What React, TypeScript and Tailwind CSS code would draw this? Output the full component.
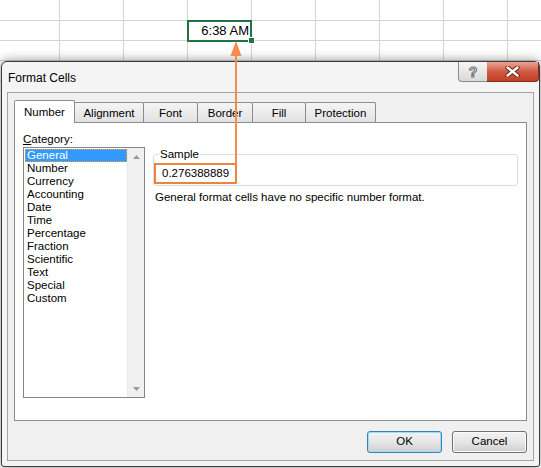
import React from "react";

/* ============================================
   Sheet behind the dialog
============================================ */

function SheetGrid() {
  const rows = [21, 20, 20, 20];
  const cols = [60, 64, 64, 64, 64, 64, 64, 64, 64];

  return (
    <div className="flex flex-col">
      {rows.map((h, r) => (
        <div key={r} className="flex" style={{ height: h }}>
          {cols.map((w, c) => (
            <div
              key={c}
              className="shrink-0 border-r border-b border-[#d4d4d4] flex items-center justify-end pr-[2px] text-[13px] leading-[19px] text-black"
              style={{ width: w }}
            >
              {r === 1 && c === 3 ? "6:38 AM" : null}
            </div>
          ))}
        </div>
      ))}
    </div>
  );
}

/* ============================================
   Dialog bits
============================================ */

const tabs = [
  { label: "Number", w: "w-[61px]" },
  { label: "Alignment", w: "w-[70px]" },
  { label: "Font", w: "w-[55px]" },
  { label: "Border", w: "w-[56px]" },
  { label: "Fill", w: "w-[54px]" },
  { label: "Protection", w: "w-[71px]" },
];

const categories = [
  "General",
  "Number",
  "Currency",
  "Accounting",
  "Date",
  "Time",
  "Percentage",
  "Fraction",
  "Scientific",
  "Text",
  "Special",
  "Custom",
];

function TabRow() {
  return (
    <div className="flex items-end h-[22px]">
      {tabs.map((t, i) =>
        i === 0 ? (
          <div
            key={t.label}
            className={`${t.w} h-[23px] -mb-px relative z-10 bg-white border-t border-l border-r border-[#898c95] rounded-t-[2px] flex items-center justify-center pt-[1px]`}
          >
            {t.label}
          </div>
        ) : (
          <div
            key={t.label}
            className={`${t.w} h-[20px] -ml-px border-t border-l border-r border-[#898c95] rounded-t-[2px] bg-linear-to-b from-[#f5f5f5] to-[#e2e2e2] flex items-center justify-center pt-[2px]`}
          >
            {t.label}
          </div>
        )
      )}
    </div>
  );
}

function CategoryList() {
  return (
    <div className="w-[122px] h-[251px] border border-[#828790] bg-white flex">
      <div className="w-[103px] pl-[1px] pt-[1px] flex flex-col">
        {categories.map((c, i) => (
          <div
            key={c}
            className={`h-[13px] leading-[13px] pl-[2px] ${
              i === 0
                ? "bg-[#3399ff] text-white outline-1 outline-dotted outline-[#e9a544] -outline-offset-1"
                : "text-black"
            }`}
          >
            {c}
          </div>
        ))}
      </div>
      <div className="w-[17px] bg-[#f0f0f0] border-l border-[#e8e8e8] flex flex-col justify-between">
        <div className="h-[17px] flex items-center justify-center">
          <svg width="7" height="4" viewBox="0 0 7 4">
            <polygon points="3.5,0 7,4 0,4" fill="#9a9a9a" />
          </svg>
        </div>
        <div className="h-[17px] flex items-center justify-center">
          <svg width="7" height="4" viewBox="0 0 7 4">
            <polygon points="0,0 7,0 3.5,4" fill="#9a9a9a" />
          </svg>
        </div>
      </div>
    </div>
  );
}

function NumberPanel() {
  return (
    <div className="w-[513px] h-[299px] border border-[#898c95] bg-white flex">
      <div className="pl-[8px] pt-[8px] flex flex-col">
        <div className="h-[16px] leading-[16px]">
          <span className="underline underline-offset-1">C</span>ategory:
        </div>
        <CategoryList />
      </div>
      <div className="ml-[8px] pt-[24px] flex flex-col">
        <fieldset className="w-[365px] border border-[#d5dfe5] rounded-[3px]">
          <legend className="ml-[5px] px-[1px] leading-[15px]">Sample</legend>
          <div className="h-[23px] leading-[22px] pl-[8px]">0.276388889</div>
        </fieldset>
        <div className="mt-[4px] ml-[2px] leading-[15px]">
          General format cells have no specific number format.
        </div>
      </div>
    </div>
  );
}

function DialogButton({ label, primary }: { label: string; primary?: boolean }) {
  return (
    <button
      className={`w-[75px] h-[22px] rounded-[3px] border text-black flex items-center justify-center bg-linear-to-b from-[#f2f2f2] via-[#e6e6e6] to-[#cfcfcf] ${
        primary
          ? "border-[#3c7fb1] shadow-[inset_0_0_0_1px_#9fdcf8]"
          : "border-[#707070] shadow-[inset_0_0_0_1px_#fbfbfb]"
      }`}
    >
      {label}
    </button>
  );
}

function FormatCellsDialog() {
  return (
    <div className="absolute left-[1px] top-[61px] w-[539px] h-[406px] border border-[#3c3c3c] rounded-t-[6px] rounded-b-[3px] bg-[#f4f4f4] shadow-[0_0_12px_rgba(0,0,0,0.45)] flex flex-col text-[11.5px] text-black">
      <div className="h-[30px] pl-[6px] pt-[2px] flex items-center text-[12px] relative">
        Format Cells
        <div className="absolute left-[456px] top-0 w-[30px] h-[20px] border border-[#8c8c8c] border-t-0 rounded-bl-[4px] bg-linear-to-b from-[#f6f6f6] to-[#d9d9d9] flex items-center justify-center">
          <span className="font-bold text-[14px] leading-none text-[#f4f4f4] [-webkit-text-stroke:1px_#707070]">
            ?
          </span>
        </div>
        <div className="absolute left-[485px] top-0 w-[52px] h-[20px] border border-[#8a2a1a] border-t-0 border-l-0 rounded-br-[4px] bg-linear-to-b from-[#e8a493] via-[#d25a43] to-[#c13e26] flex items-center justify-center">
          <svg width="15" height="11" viewBox="0 0 15 11">
            <path d="M2.5 1.5 L12.5 9.5 M12.5 1.5 L2.5 9.5" stroke="#5a2015" strokeWidth="4.2" strokeLinecap="round" />
            <path d="M2.5 1.5 L12.5 9.5 M12.5 1.5 L2.5 9.5" stroke="#ffffff" strokeWidth="2.4" strokeLinecap="round" />
          </svg>
        </div>
      </div>

      <div className="mx-[5px] w-[527px] h-[369px] border border-[#a3a3a3] bg-[#f0f0f0] px-[6px] pt-[7px] flex flex-col">
        <TabRow />
        <NumberPanel />
        <div className="mt-[10px] flex justify-end gap-[10px]">
          <DialogButton label="OK" primary />
          <DialogButton label="Cancel" />
        </div>
      </div>
    </div>
  );
}

/* ============================================
   App Root
============================================ */

export default function App() {
  return (
    <div className="relative w-[541px] h-[468px] overflow-hidden bg-white font-['Liberation_Sans',Arial,sans-serif]">
      <SheetGrid />

      {/* selected cell */}
      <div className="absolute left-[187px] top-[20px] w-[65px] h-[22px] border-2 border-[#217346]" />
      <div className="absolute left-[248px] top-[37px] w-[7px] h-[7px] bg-[#217346] border border-white" />

      <FormatCellsDialog />

      {/* callout */}
      <div className="absolute left-[154px] top-[163px] w-[83px] h-[21px] border-2 border-[#f0823f]" />
      <svg className="absolute left-0 top-0 pointer-events-none" width="541" height="468">
        <line x1="236" y1="55" x2="236" y2="164" stroke="#f58c4d" strokeWidth="2" />
        <polygon points="236,41 230.5,56 241.5,56" fill="#f58c4d" />
      </svg>
    </div>
  );
}
